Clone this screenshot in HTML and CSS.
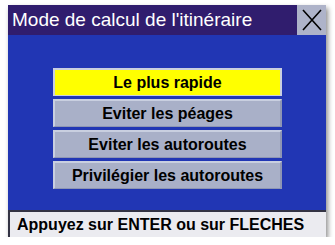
FILE: index.html
```html
<!DOCTYPE html>
<html>
<head>
<meta charset="utf-8">
<link rel="stylesheet" href="styles.css">
</head>
<body>
<div class="screen">
  <div class="titlebar">
    <div class="title">Mode de calcul de l'itinéraire</div>
    <div class="close">
      <svg width="22" height="24" viewBox="0 0 22 24"><path d="M2 2 L20 22 M20 2 L2 22" stroke="#000" stroke-width="1.6" fill="none"/></svg>
    </div>
  </div>
  <div class="content">
    <div class="btn selected">Le plus rapide</div>
    <div class="btn">Eviter les péages</div>
    <div class="btn">Eviter les autoroutes</div>
    <div class="btn">Privilégier les autoroutes</div>
  </div>
  <div class="status">Appuyez sur ENTER ou sur FLECHES</div>
</div>
</body>
</html>
```
FILE: styles.css
```css
html, body {
  margin: 0;
  padding: 0;
  background: #ffffff;
}
body {
  padding: 5px 0 0 8px;
  font-family: "Liberation Sans", Arial, sans-serif;
}
.screen {
  width: 318px;
  height: 232px;
  display: flex;
  flex-direction: column;
  box-shadow: 2px 3px 5px rgba(0,0,0,0.45);
}
.titlebar {
  height: 30px;
  display: flex;
  background: #301d6e;
}
.title {
  flex: 1;
  color: #ffffff;
  font-size: 19px;
  line-height: 30px;
  padding-left: 4px;
  white-space: nowrap;
}
.close {
  width: 29px;
  background: #aeb3c9;
  display: flex;
  align-items: center;
  justify-content: center;
}
.content {
  flex: 1;
  background: #2136b4;
  display: flex;
  flex-direction: column;
  align-items: center;
  padding-top: 33px;
  gap: 3px;
  padding-left: 1px;
}
.btn {
  width: 225px;
  height: 25px;
  background: #a9b0c8;
  border-top: 2px solid #c9cfe0;
  border-left: 2px solid #c9cfe0;
  border-right: 2px solid #8e96b4;
  border-bottom: 1px solid #8e96b4;
  font-weight: bold;
  font-size: 16px;
  line-height: 25px;
  text-align: center;
  color: #000;
}
.btn.selected {
  background: #ffff00;
  border-color: #c9cfe0;
}
.status {
  height: 25px;
  background: #ebebf0;
  border-top: 2px solid #333344;
  border-left: 2px solid #333344;
  font-size: 16px;
  font-weight: bold;
  line-height: 25px;
  padding-left: 7px;
  color: #000;
  white-space: nowrap;
}
```
